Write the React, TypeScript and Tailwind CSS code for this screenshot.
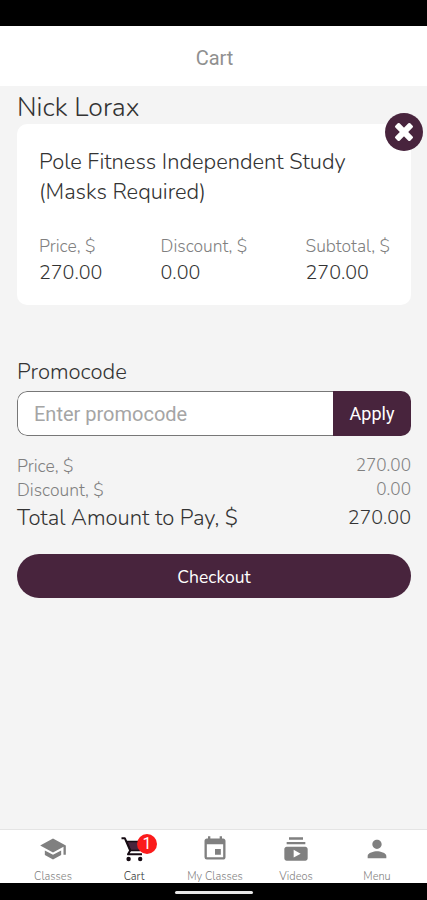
import { ReactNode } from "react";
import { MdEvent, MdPerson, MdSchool, MdSubscriptions } from "react-icons/md";

function CloseIcon() {
  return (
    <svg width="22" height="22" viewBox="-11 -11 22 22" fill="currentColor">
      <rect x="-10.5" y="-3" width="21" height="6" rx="1.3" transform="rotate(45)" />
      <rect x="-10.5" y="-3" width="21" height="6" rx="1.3" transform="rotate(-45)" />
    </svg>
  );
}

function CartIcon() {
  return (
    <svg width="28" height="28" viewBox="0 0 28 28" fill="none">
      <path
        d="M6.5 6.5H24l-4 9H10.5z"
        fill="#48243d"
        stroke="#160b13"
        strokeWidth="1.4"
        strokeLinejoin="round"
      />
      <path
        d="M1.5 3.2h3.3l5.4 12.3-2.2 3.8h14"
        stroke="#160b13"
        strokeWidth="2"
        strokeLinejoin="round"
      />
      <circle cx="8.6" cy="24" r="2.2" fill="#160b13" />
      <circle cx="20.2" cy="24" r="2.2" fill="#160b13" />
    </svg>
  );
}

interface AmountProps {
  label: string;
  value: string;
}

function Amount({ label, value }: AmountProps) {
  return (
    <div>
      <p className="text-[17.5px] leading-[25px] text-[#808080]">{label}</p>
      <p className="text-[19.7px] leading-[27px] text-[#333]">{value}</p>
    </div>
  );
}

function SummaryRow({ label, value }: AmountProps) {
  return (
    <div className="flex justify-between text-[17.5px] leading-6 text-[#808080]">
      <span>{label}</span>
      <span className="text-[17.2px]">{value}</span>
    </div>
  );
}

interface TabProps {
  label: string;
  icon: ReactNode;
  active?: boolean;
  badge?: number;
}

function Tab({ label, icon, active, badge }: TabProps) {
  return (
    <button className="flex w-[81px] flex-col items-center text-[#808080]">
      <span className="relative mt-[5px] text-[28px]">
        {icon}
        {badge && (
          <span className="absolute -top-[1px] left-[17px] flex size-5 items-center justify-center rounded-full bg-[#fb1b1b] font-[Roboto,sans-serif] text-[16px] leading-none font-normal text-white">
            {badge}
          </span>
        )}
      </span>
      <span
        className={`mt-[7px] text-[11px] leading-[14px] whitespace-nowrap ${
          active ? "text-[#333]" : "text-[#808080]"
        }`}
      >
        {label}
      </span>
    </button>
  );
}

export default function App() {
  return (
    <div className="flex h-[900px] w-[427px] flex-col overflow-hidden bg-[#f4f4f4] font-[Nunito,Lato,sans-serif] font-light text-[#333]">
      <div className="h-[26px] shrink-0 bg-black" />
      <header className="flex h-[60px] shrink-0 items-center justify-center bg-white pt-[4px] pl-[2px] font-[Roboto,sans-serif] text-[20px] font-normal text-[#909090]">
        Cart
      </header>

      <main className="flex-1 pr-4 pl-[17px]">
        <h2 className="pt-[5px] text-[26.6px] leading-[33px]">Nick Lorax</h2>

        <section className="relative h-[181px] rounded-[10px] bg-white pt-[23px] pr-[21px] pl-[22px]">
          <button className="absolute -top-[11.5px] -right-[12px] flex size-[38px] items-center justify-center rounded-full bg-[#48243d] text-white">
            <CloseIcon />
          </button>
          <h3 className="text-[21.9px] leading-[30px]">
            Pole Fitness Independent Study
            <br />
            (Masks Required)
          </h3>
          <div className="mt-[27px] flex justify-between">
            <Amount label="Price, $" value="270.00" />
            <Amount label="Discount, $" value="0.00" />
            <Amount label="Subtotal, $" value="270.00" />
          </div>
        </section>

        <h2 className="mt-[52px] text-[22px] leading-[30px]">Promocode</h2>
        <div className="mt-1 flex h-[45px] overflow-hidden rounded-[10px]">
          <input
            className="min-w-0 flex-1 rounded-l-[10px] border border-r-0 border-[#777] bg-white pl-4 font-[Roboto,sans-serif] text-[20px] font-normal outline-none placeholder:text-[#a5a5a5]"
            placeholder="Enter promocode"
          />
          <button className="w-[78px] bg-[#48243d] font-[Roboto,sans-serif] text-[18px] font-normal text-white">
            Apply
          </button>
        </div>

        <div className="mt-[18px]">
          <SummaryRow label="Price, $" value="270.00" />
          <SummaryRow label="Discount, $" value="0.00" />
          <div className="mt-px flex justify-between">
            <span className="text-[22px] leading-[30px]">
              Total Amount to Pay, $
            </span>
            <span className="text-[19.7px] leading-[29px]">270.00</span>
          </div>
        </div>

        <button className="mt-[21px] flex h-11 w-full items-center justify-center rounded-full bg-[#48243d] pt-[2px] text-[17.5px] font-normal text-white">
          Checkout
        </button>
      </main>

      <nav className="flex h-[54px] shrink-0 justify-center border-t border-[#e4e4e4] bg-white pl-[3px]">
        <Tab label="Classes" icon={<MdSchool />} />
        <Tab label="Cart" icon={<CartIcon />} active badge={1} />
        <Tab label="My Classes" icon={<MdEvent />} />
        <Tab label="Videos" icon={<MdSubscriptions />} />
        <Tab label="Menu" icon={<MdPerson />} />
      </nav>
      <div className="flex h-[17px] shrink-0 justify-center bg-black pt-2">
        <div className="h-[3px] w-[78px] rounded-full bg-[#e5e5e5]" />
      </div>
    </div>
  );
}
